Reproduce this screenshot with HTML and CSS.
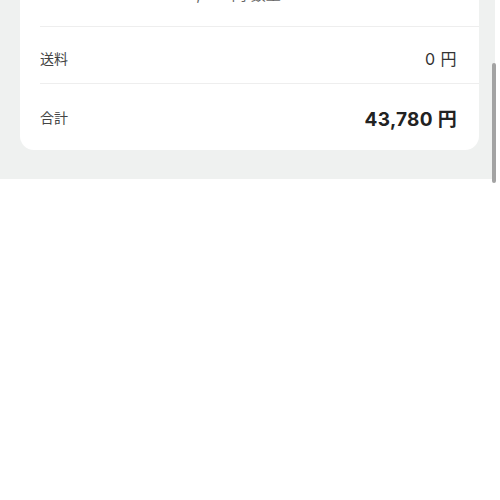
FILE: index.html
```html
<!DOCTYPE html>
<html lang="ja">
<head>
    <meta charset="UTF-8">
    <meta name="viewport" content="width=device-width, initial-scale=1.0">
    <title>ご注文内容の確認</title>
    <link rel="stylesheet" href="styles.css">
</head>
<body>

<div class="page">
    <section class="summary">
        <div class="row item">
            <span class="item-price">43,780 円 数量: 1</span>
        </div>
        <div class="row shipping">
            <span class="label">送料</span>
            <span class="value">0 円</span>
        </div>
        <div class="row total">
            <span class="label">合計</span>
            <span class="value">43,780 円</span>
        </div>
    </section>
</div>

<div class="scrollbar"></div>

</body>
</html>
```

FILE: styles.css
```css
body {
    margin: 0;
    background-color: #fff;
    font-family: 'Inter', 'Noto Sans CJK JP', sans-serif;
    color: #333;
}

.page {
    width: 459px;
    background-color: #eff1f0;
    padding: 0 16px 29px 20px;
    overflow: hidden;
}

.summary {
    margin-top: -30px;
    background-color: #fff;
    border-radius: 0 0 14px 14px;
    padding-left: 20px;
}

.row {
    display: flex;
    align-items: center;
    justify-content: space-between;
    padding-right: 22px;
    border-bottom: 1px solid #eeeeee;
    height: 56px;
}

.row.item {
    justify-content: center;
    padding-right: 46px;
}

.item-price {
    font-size: 15px;
    color: #666;
    margin-top: -10px;
}

.row.shipping {
    padding-top: 6px;
    height: 50px;
}

.label {
    font-size: 14px;
    color: #444;
}

.value {
    font-size: 16px;
    color: #333;
    letter-spacing: 0.5px;
}

.row.total {
    border-bottom: none;
    height: 66px;
}

.total .value {
    font-size: 19px;
    font-weight: 700;
    color: #222;
    letter-spacing: 0.3px;
}

.scrollbar {
    position: absolute;
    top: 63px;
    left: 492px;
    width: 4px;
    height: 120px;
    border-radius: 2px;
    background-color: #a3a3a3;
}
```
